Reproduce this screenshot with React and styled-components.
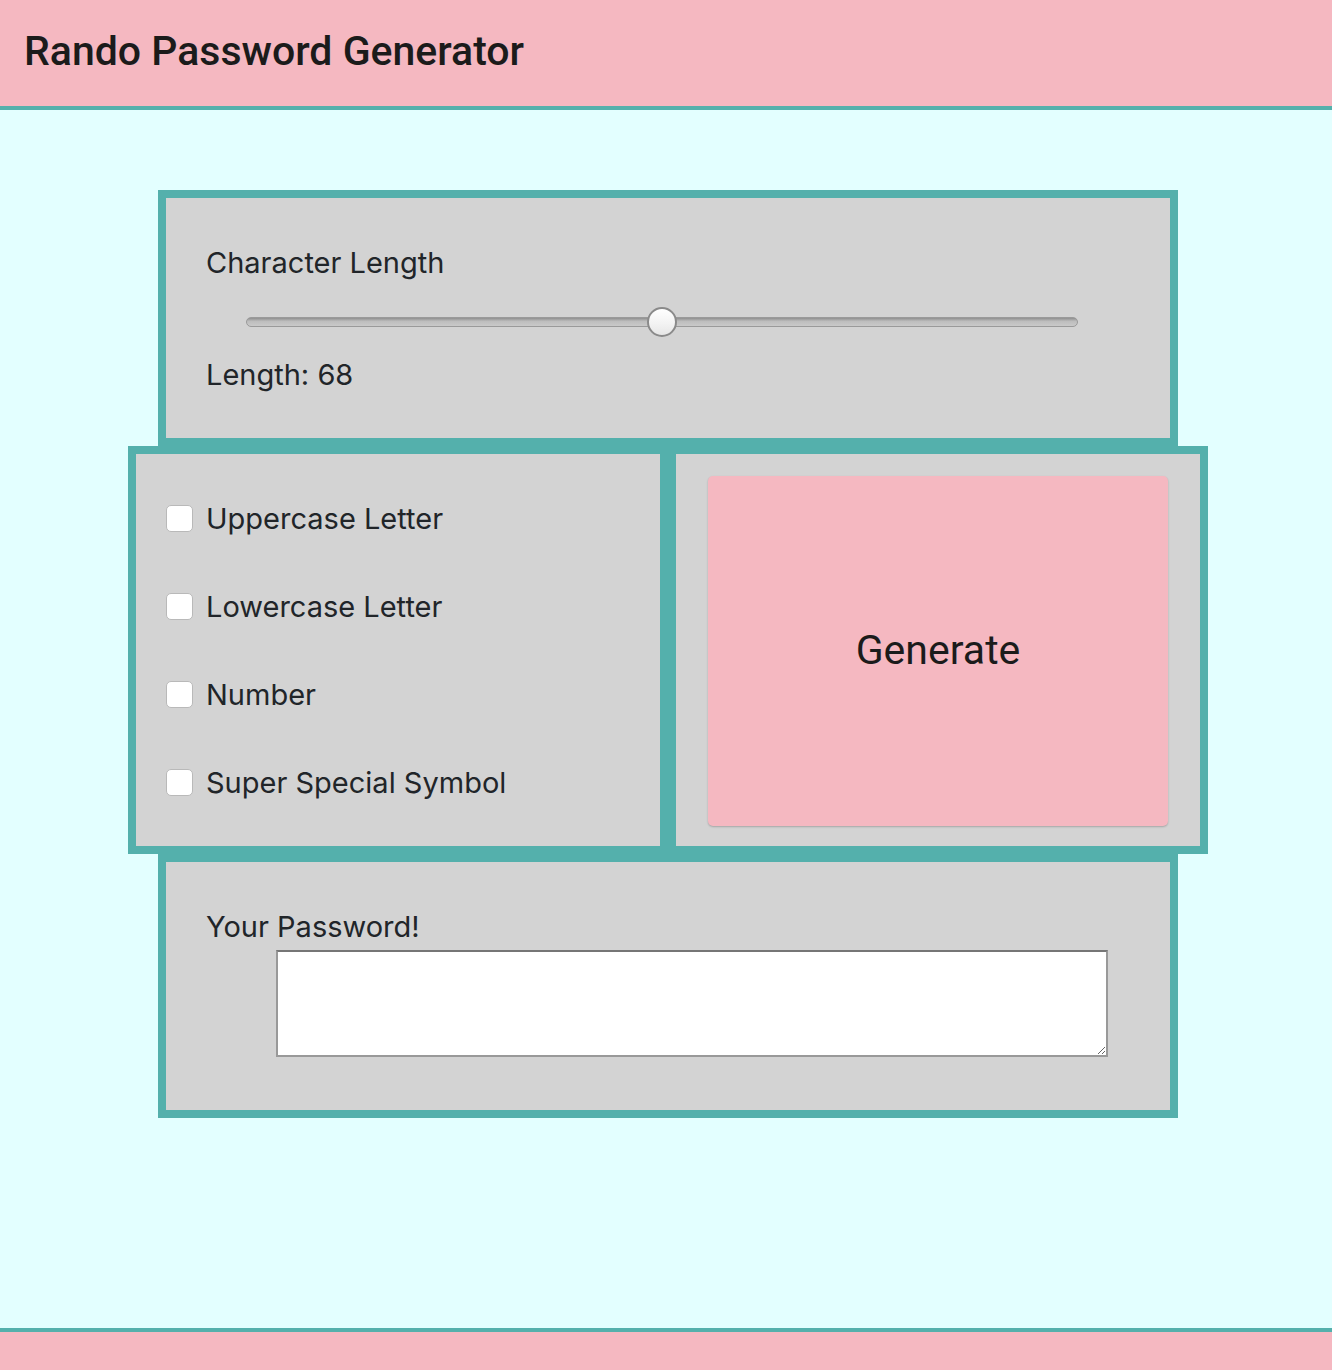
import styled, { createGlobalStyle } from 'styled-components';
import { useState } from 'react';

const PINK = '#f5b8c1';
const TEAL = '#54b0ac';
const GRAY = '#d3d3d3';
const INK = '#212529';

const GlobalStyle = createGlobalStyle`
	* {
		box-sizing: border-box;
	}

	body {
		margin: 0;
		background: #e3ffff;
		color: ${INK};
		font-family: Inter, "Noto Sans", sans-serif;
	}
`;

const Page = styled.div`
	display: flex;
	flex-direction: column;
	min-height: 100vh;
`;

const Header = styled.header`
	display: flex;
	align-items: center;
	height: 110px;
	padding: 0 24px 4px;
	background: ${PINK};
	border-bottom: 4px solid ${TEAL};

	h1 {
		margin: 0;
		font-family: Roboto, sans-serif;
		font-size: 41px;
		font-weight: 500;
		color: #1b1b1b;
	}
`;

const Main = styled.main`
	flex: 1;
	display: flex;
	flex-direction: column;
	align-items: center;
	padding: 80px 0 0 4px;
`;

const Card = styled.section`
	width: ${(props) => props.width || '1020px'};
	height: ${(props) => props.height};
	background: ${GRAY};
	border: 8px solid ${TEAL};
`;

const LengthCard = styled(Card)`
	padding: 43px 40px 0;

	.label,
	.value {
		font-size: 29px;
		line-height: 44px;
	}
`;

const Range = styled.input`
	display: block;
	width: 832px;
	height: 70px;
	margin: 0 0 -2px 40px;
	padding: 0;
	-webkit-appearance: none;
	appearance: none;
	background: transparent;
	transform: translateY(2px);

	&::-webkit-slider-runnable-track {
		height: 10px;
		border: 1px solid #9a9a9a;
		border-radius: 5px;
		background: linear-gradient(#8e8e8e, #bdbdbd 40%, #c9c9c9);
	}

	&::-webkit-slider-thumb {
		-webkit-appearance: none;
		width: 30px;
		height: 30px;
		margin-top: -11px;
		border: 2px solid #8a8a8a;
		border-radius: 50%;
		background: linear-gradient(#ffffff, #f3f3f3 55%, #e6e6e6);
	}
`;

const Options = styled.div`
	display: flex;
	width: 1080px;
`;

const CheckList = styled(Card)`
	padding: 20px 30px 0;
`;

const CheckRow = styled.label`
	display: flex;
	align-items: center;
	gap: 13px;
	height: 88px;
	font-size: 29px;
	cursor: pointer;

	input {
		-webkit-appearance: none;
		appearance: none;
		flex: none;
		width: 27px;
		height: 27px;
		margin: 0;
		background: #fff;
		border: 1px solid #b9b9b9;
		border-radius: 5px;
	}

	input:checked {
		background: #2f7bf5;
		border-color: #2f7bf5;
	}
`;

const ButtonBox = styled(Card)`
	padding: 22px 32px 20px;
`;

const GenerateButton = styled.button`
	width: 100%;
	height: 100%;
	padding: 0 0 2px;
	border: none;
	border-radius: 5px;
	background: ${PINK};
	box-shadow: 0 1px 2px rgba(0, 0, 0, 0.22);
	color: #1b1b1b;
	font-family: Roboto, sans-serif;
	font-size: 41px;
	cursor: pointer;
`;

const PasswordCard = styled(Card)`
	padding: 43px 40px 0;

	label {
		display: block;
		font-size: 29px;
		line-height: 44px;
	}
`;

const PasswordField = styled.textarea`
	display: block;
	width: 832px;
	height: 107px;
	margin: 1px 0 0 70px;
	border: 2px solid #999;
	border-top-color: #767676;
	background: #fff;
	font-family: "Liberation Mono", monospace;
	font-size: 16px;
`;

const Footer = styled.footer`
	height: 42px;
	background: ${PINK};
	border-top: 4px solid ${TEAL};
`;

const pool = {
	upper: 'ABCDEFGHIJKLMNOPQRSTUVWXYZ',
	lower: 'abcdefghijklmnopqrstuvwxyz',
	number: '0123456789',
	symbol: '!@#$%^&*()-_=+[]{};:,.<>?/',
};

const options = [
	{ key: 'upper', label: 'Uppercase Letter' },
	{ key: 'lower', label: 'Lowercase Letter' },
	{ key: 'number', label: 'Number' },
	{ key: 'symbol', label: 'Super Special Symbol' },
];

export default function App() {
	const [length, setLength] = useState(68);
	const [checked, setChecked] = useState({});
	const [password, setPassword] = useState('');

	const generate = () => {
		const chars = options.filter((o) => checked[o.key]).map((o) => pool[o.key]).join('');
		if (!chars) return;
		let result = '';
		for (let i = 0; i < length; i++) {
			result += chars[Math.floor(Math.random() * chars.length)];
		}
		setPassword(result);
	};

	return (
		<Page>
			<GlobalStyle />
			<Header>
				<h1>Rando Password Generator</h1>
			</Header>
			<Main>
				<LengthCard height="256px">
					<div className="label">Character Length</div>
					<Range
						type="range"
						min="8"
						max="128"
						value={length}
						onChange={(event) => setLength(Number(event.target.value))}
					/>
					<div className="value">Length: {length}</div>
				</LengthCard>
				<Options>
					<CheckList width="540px" height="408px">
						{options.map((o) => (
							<CheckRow key={o.key}>
								<input
									type="checkbox"
									checked={!!checked[o.key]}
									onChange={(event) => setChecked({ ...checked, [o.key]: event.target.checked })}
								/>
								{o.label}
							</CheckRow>
						))}
					</CheckList>
					<ButtonBox width="540px" height="408px">
						<GenerateButton onClick={generate}>Generate</GenerateButton>
					</ButtonBox>
				</Options>
				<PasswordCard height="264px">
					<label htmlFor="password">Your Password!</label>
					<PasswordField id="password" readOnly value={password} />
				</PasswordCard>
			</Main>
			<Footer />
		</Page>
	);
}
